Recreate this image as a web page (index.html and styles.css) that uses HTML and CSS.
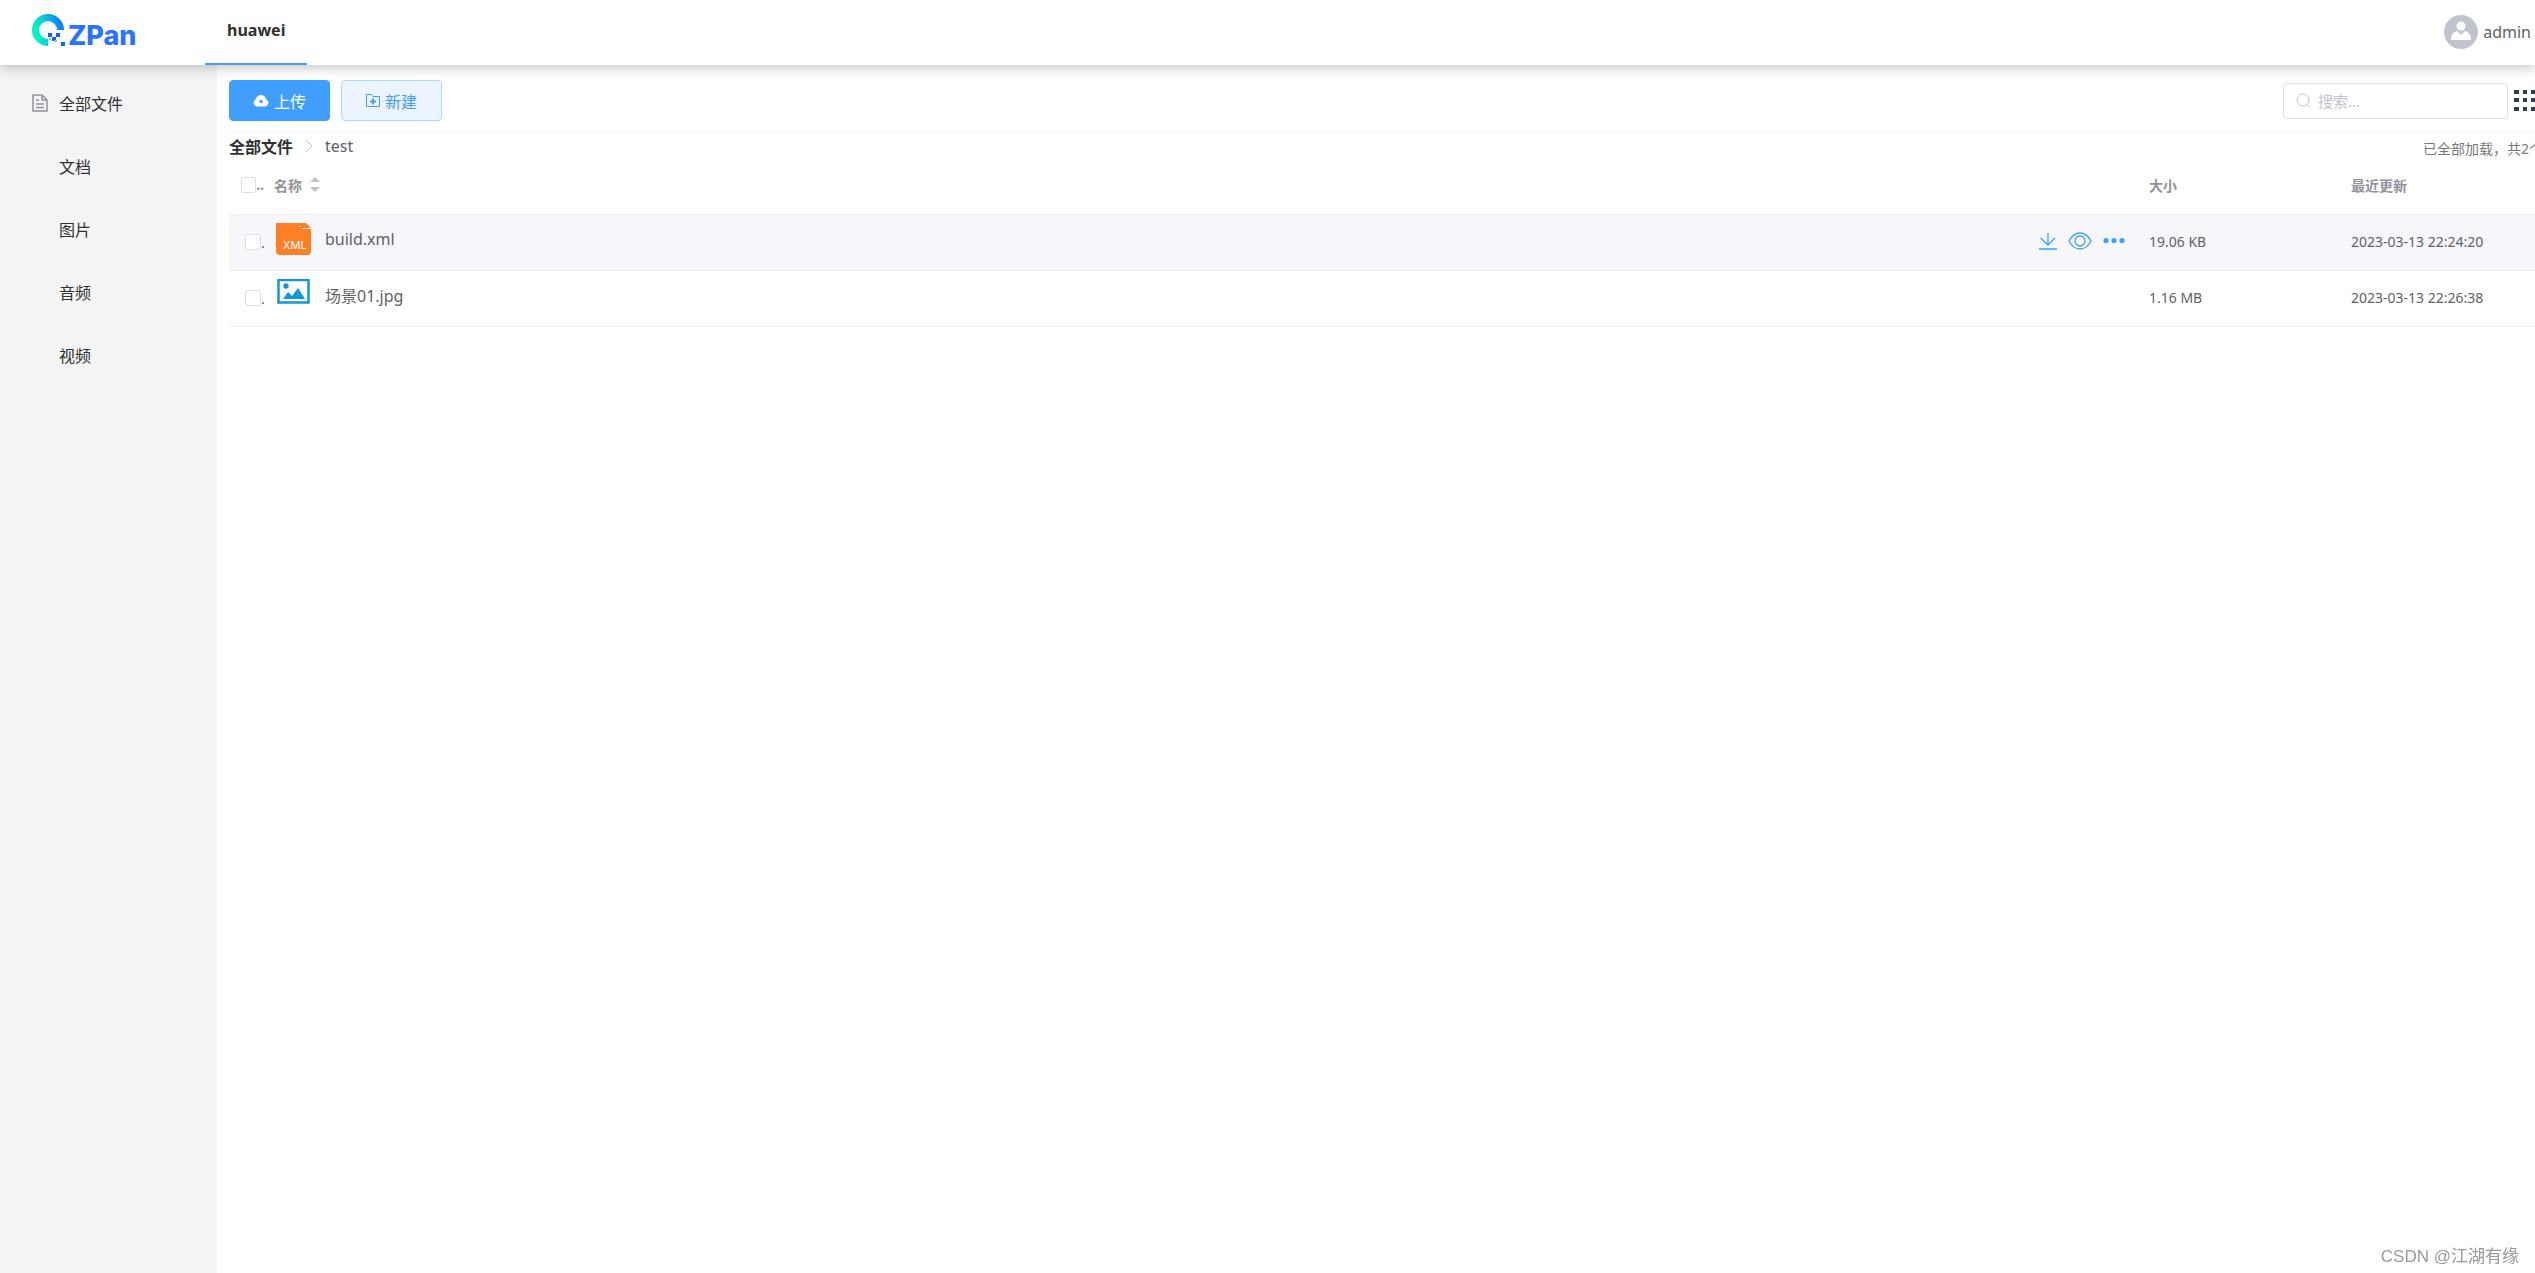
FILE: index.html
```html
<!DOCTYPE html>
<html lang="zh-CN">
<head>
  <meta charset="UTF-8">
  <meta name="viewport" content="width=device-width, initial-scale=1.0">
  <title>ZPan</title>
  <link rel="stylesheet" href="styles.css">
</head>
<body>
  <header class="header">
    <a class="logo" href="#" aria-label="ZPan">
      <svg width="34" height="34" viewBox="0 0 34 34">
        <defs>
          <linearGradient id="ring" x1="0" y1="0.6" x2="1" y2="0.3">
            <stop offset="0" stop-color="#00f5c0"/>
            <stop offset="0.5" stop-color="#0cc3dc"/>
            <stop offset="1" stop-color="#0a84f5"/>
          </linearGradient>
        </defs>
        <path d="M16 29.500A12.500 12.500 0 1 1 28.500 17" fill="none" stroke="url(#ring)" stroke-width="7"/>
        <path d="M16 20h4v4h-4zM20 24h4v4h-4zM24 20h4v4h-4zM29 29h4v4h-4z" fill="#1565e8"/>
        <path d="M22 27h3v2h-3zM17 25h2v2h-2z" fill="#8fb8fa"/>
      </svg>
      <span class="logo-text">ZPan</span>
    </a>
    <nav class="tabs">
      <a class="tab active" href="#">huawei</a>
    </nav>
    <a class="user" href="#">
      <svg width="34" height="34" viewBox="0 0 34 34">
        <circle cx="17" cy="17" r="17" fill="#c0c4cc"/>
        <circle cx="17" cy="11" r="4.500" fill="#fff"/>
        <path d="M7 25c0-5 2-8 6-9l4 4 4-4c4 1 6 4 6 9z" fill="#fff"/>
      </svg>
      <span>admin</span>
    </a>
  </header>

  <div class="layout">
    <aside class="sidebar">
      <a class="menu-item" href="#">
        <svg width="16" height="18" viewBox="0 0 16 18" fill="none" stroke="#909399" stroke-width="1.500">
          <path d="M1 1h9l5 5v11H1zM10 1v5h5M4 6h3M4 10h8M4 13.500h8"/>
        </svg>
        <span>全部文件</span>
      </a>
      <a class="menu-item sub" href="#">文档</a>
      <a class="menu-item sub" href="#">图片</a>
      <a class="menu-item sub" href="#">音频</a>
      <a class="menu-item sub" href="#">视频</a>
    </aside>

    <main class="content">
      <div class="wrap">
        <div class="toolbar">
          <button class="btn primary" type="button">
            <svg width="16" height="14" viewBox="0 0 16 14">
              <path d="M4 12.500a3.800 3.800 0 0 1-1.500-7C3.500 2.500 5.500 1 8 1s4.500 1.500 5.500 4.500a3.800 3.800 0 0 1-1.500 7z" fill="#fff"/>
              <path d="M8 5.500l2.500 2.500H9v1H7V8H5.500z" fill="#409eff"/>
            </svg>
            上传
          </button>
          <button class="btn plain" type="button">
            <svg width="14" height="13" viewBox="0 0 14 13" fill="none" stroke="#409eff">
              <path d="M.5.500h5l1.500 2h6.500v10H.5z"/>
              <path d="M7 4.500v6M4 7.500h6" stroke-width="2"/>
            </svg>
            新建
          </button>
          <label class="search">
            <svg width="15" height="15" viewBox="0 0 15 15" fill="none" stroke="#c0c4cc">
              <circle cx="7" cy="7" r="6"/>
              <path d="M11 11.500l2.500 2.500"/>
            </svg>
            <input type="text" placeholder="搜索..." aria-label="搜索">
          </label>
          <button class="view" type="button" aria-label="网格">
            <svg width="24" height="22" viewBox="0 0 24 22">
              <path d="M0 0h5v4H0zM9 0h4v4H9zM17 0h5v4h-5zM0 8h5v4H0zM9 8h4v4H9zM17 8h5v4h-5zM0 17h5v4H0zM9 17h4v4H9zM17 17h5v4h-5z" fill="#2c3e50"/>
            </svg>
          </button>
        </div>

        <div class="path">
          <a class="root" href="#">全部文件</a>
          <svg width="8" height="14" viewBox="0 0 8 14" fill="none" stroke="#c0c4cc"><path d="M1 1l6 6-6 6"/></svg>
          <span>test</span>
          <span class="count">已全部加载，共2个</span>
        </div>

        <table class="files">
          <colgroup>
            <col class="col-check">
            <col>
            <col class="col-size">
            <col class="col-date">
          </colgroup>
          <thead>
            <tr>
              <th class="check"><div><input type="checkbox" aria-label="全选">..</div></th>
              <th>
                <button class="sort" type="button">名称
                  <svg width="10" height="16" viewBox="0 0 10 16" fill="#c0c4cc"><path d="M0 5l5-5 5 5zM0 10h10l-5 5z"/></svg>
                </button>
              </th>
              <th>大小</th>
              <th>最近更新</th>
            </tr>
          </thead>
          <tbody>
            <tr class="hover">
              <td class="check"><div><input type="checkbox" aria-label="build.xml">.</div></td>
              <td>
                <div class="name">
                  <svg width="36" height="32" viewBox="0 0 36 32">
                    <path d="M0 0h30l5 5v23q0 4-4 4H4q-4 0-4-4z" fill="#ff7f27"/>
                    <path d="M26 5.500h9M23 3.500h1.500" stroke="#fff" fill="none"/>
                    <text class="icon-text" x="7" y="26">XML</text>
                  </svg>
                  <a href="#">build.xml</a>
                  <div class="actions">
                    <button type="button" aria-label="下载">
                      <svg width="18" height="18" viewBox="0 0 18 18" fill="none" stroke="#409eff" stroke-width="1.300"><path d="M9 1v12M1.500 6L9 13l7-7M0 17h18"/></svg>
                    </button>
                    <button type="button" aria-label="预览">
                      <svg width="24" height="18" viewBox="0 0 24 18" fill="none" stroke="#409eff" stroke-width="1.300"><path d="M1 9q4.500-8 11-8t11 8q-4.500 8-11 8T1 9z"/><circle cx="12" cy="9" r="5"/></svg>
                    </button>
                    <button type="button" aria-label="更多">
                      <svg width="22" height="18" viewBox="0 0 22 18" fill="#409eff"><circle cx="3" cy="8.500" r="2.600"/><circle cx="11" cy="8.500" r="2.600"/><circle cx="19" cy="8.500" r="2.600"/></svg>
                    </button>
                  </div>
                </div>
              </td>
              <td>19.06 KB</td>
              <td>2023-03-13 22:24:20</td>
            </tr>
            <tr>
              <td class="check"><div><input type="checkbox" aria-label="场景01.jpg">.</div></td>
              <td>
                <div class="name">
                  <svg width="36" height="32" viewBox="0 0 36 32">
                    <path d="M2.500 1h30v22.500h-30z" fill="#fff" stroke="#1296db" stroke-width="2.500"/>
                    <circle cx="10" cy="7" r="2.700" fill="#1296db"/>
                    <path d="M7 20l5-7 4 4 6-8 7 11z" fill="#1296db"/>
                  </svg>
                  <a href="#">场景01.jpg</a>
                </div>
              </td>
              <td>1.16 MB</td>
              <td>2023-03-13 22:26:38</td>
            </tr>
          </tbody>
        </table>
      </div>
    </main>
  </div>
  <div class="watermark">CSDN @江湖有缘</div>
</body>
</html>
```

FILE: styles.css
```css
* {
  box-sizing: border-box;
}
body {
  margin: 0;
  min-height: 100vh;
  display: flex;
  flex-direction: column;
  font-family: "Noto Sans", "Noto Sans CJK SC", sans-serif;
  font-size: 16px;
  color: #303133;
  background: #fff;
}
a {
  color: inherit;
  text-decoration: none;
}
button {
  font: inherit;
  padding: 0;
  border: none;
  background: none;
  cursor: pointer;
}
svg {
  display: block;
  flex: none;
}
.header {
  display: flex;
  height: 65px;
  padding: 0 4px 0 32px;
  background: #fff;
  box-shadow: 0 2px 12px rgba(0, 0, 0, 0.25);
  z-index: 1;
}
.logo {
  display: flex;
  align-items: center;
  width: 173px;
  padding-bottom: 5px;
}
.logo-text {
  margin-left: 2px;
  padding-top: 12px;
  font-family: Inter, sans-serif;
  font-size: 27px;
  font-weight: 800;
  line-height: 30px;
  color: #2b73ff;
}
.tabs {
  display: flex;
}
.tab {
  padding: 0 22px;
  line-height: 60px;
  font-weight: 700;
}
.tab.active {
  border-bottom: 2px solid #409eff;
}
.user {
  display: flex;
  align-items: center;
  gap: 5px;
  margin-left: auto;
  padding-bottom: 2px;
  color: #606266;
}
.layout {
  display: flex;
  flex: 1;
}
.sidebar {
  width: 217px;
  padding-top: 6px;
  background: #f4f4f4;
}
.menu-item {
  display: flex;
  align-items: center;
  gap: 11px;
  height: 63px;
  padding-left: 32px;
}
.menu-item.sub {
  padding-left: 59px;
}
.content {
  flex: 1;
  min-width: 0;
  overflow: hidden;
}
.wrap {
  margin: 0 -8px 0 12px;
}
.toolbar {
  display: flex;
  align-items: center;
  height: 67px;
  padding-top: 5px;
  padding-right: 5px;
  border-bottom: 1px solid #f5f5f5;
}
.btn {
  display: flex;
  align-items: center;
  justify-content: center;
  gap: 5px;
  width: 101px;
  height: 41px;
  margin-right: 11px;
  border: 1px solid #409eff;
  border-radius: 4px;
}
.primary {
  background: #409eff;
  color: #fff;
}
.plain {
  background: #ecf5ff;
  border-color: #b3d8ff;
  color: #409eff;
}
.search {
  display: flex;
  align-items: center;
  gap: 7px;
  width: 225px;
  height: 36px;
  margin-left: auto;
  padding: 0 12px;
  border: 1px solid #dcdfe6;
  border-radius: 4px;
}
.search input {
  flex: 1;
  min-width: 0;
  padding: 0;
  border: none;
  outline: none;
  font: inherit;
  font-size: 15px;
}
.search input::placeholder {
  color: #c0c4cc;
}
.view {
  margin-left: 6px;
}
.path {
  display: flex;
  align-items: center;
  gap: 12px;
  height: 28px;
  color: #606266;
}
.root {
  font-weight: 700;
  color: #303133;
}
.count {
  margin-left: auto;
  padding-top: 4px;
  font-size: 14px;
  color: #7a7a7a;
}
.files {
  width: 100%;
  table-layout: fixed;
  border-collapse: collapse;
  font-size: 14px;
  color: #606266;
}
.col-check {
  width: 47px;
}
.col-size {
  width: 202px;
}
.col-date {
  width: 204px;
}
.files th,
.files td {
  height: 56px;
  padding: 0 12px 2px;
  border-bottom: 1px solid #ebeef5;
  text-align: left;
}
.files th {
  height: 54px;
  padding-bottom: 4px;
  color: #909399;
}
.files th:nth-child(2),
.files td:nth-child(2) {
  padding-left: 0;
}
.files td.check {
  padding: 0 0 0 16px;
}
.check div {
  display: flex;
  align-items: center;
}
.check input {
  appearance: none;
  width: 16px;
  height: 16px;
  margin: 0;
  border: 1px solid #dcdfe6;
  border-radius: 2px;
  background: #fff;
}
.hover {
  background: #f5f7fa;
}
.sort {
  display: flex;
  align-items: center;
  gap: 8px;
  margin-left: -2px;
  color: #909399;
}
.name {
  display: flex;
  align-items: center;
  gap: 13px;
  font-size: 16px;
}
.name > svg,
.name > a {
  margin-bottom: 4px;
}
.icon-text {
  font-family: Inter, sans-serif;
  font-size: 11px;
  fill: #fff;
}
.actions {
  display: flex;
  gap: 11px;
  margin-left: auto;
}
.watermark {
  position: fixed;
  right: 16px;
  bottom: 6px;
  font-family: "Liberation Sans", "Noto Sans CJK SC", sans-serif;
  font-size: 17px;
  color: #999;
}
```
